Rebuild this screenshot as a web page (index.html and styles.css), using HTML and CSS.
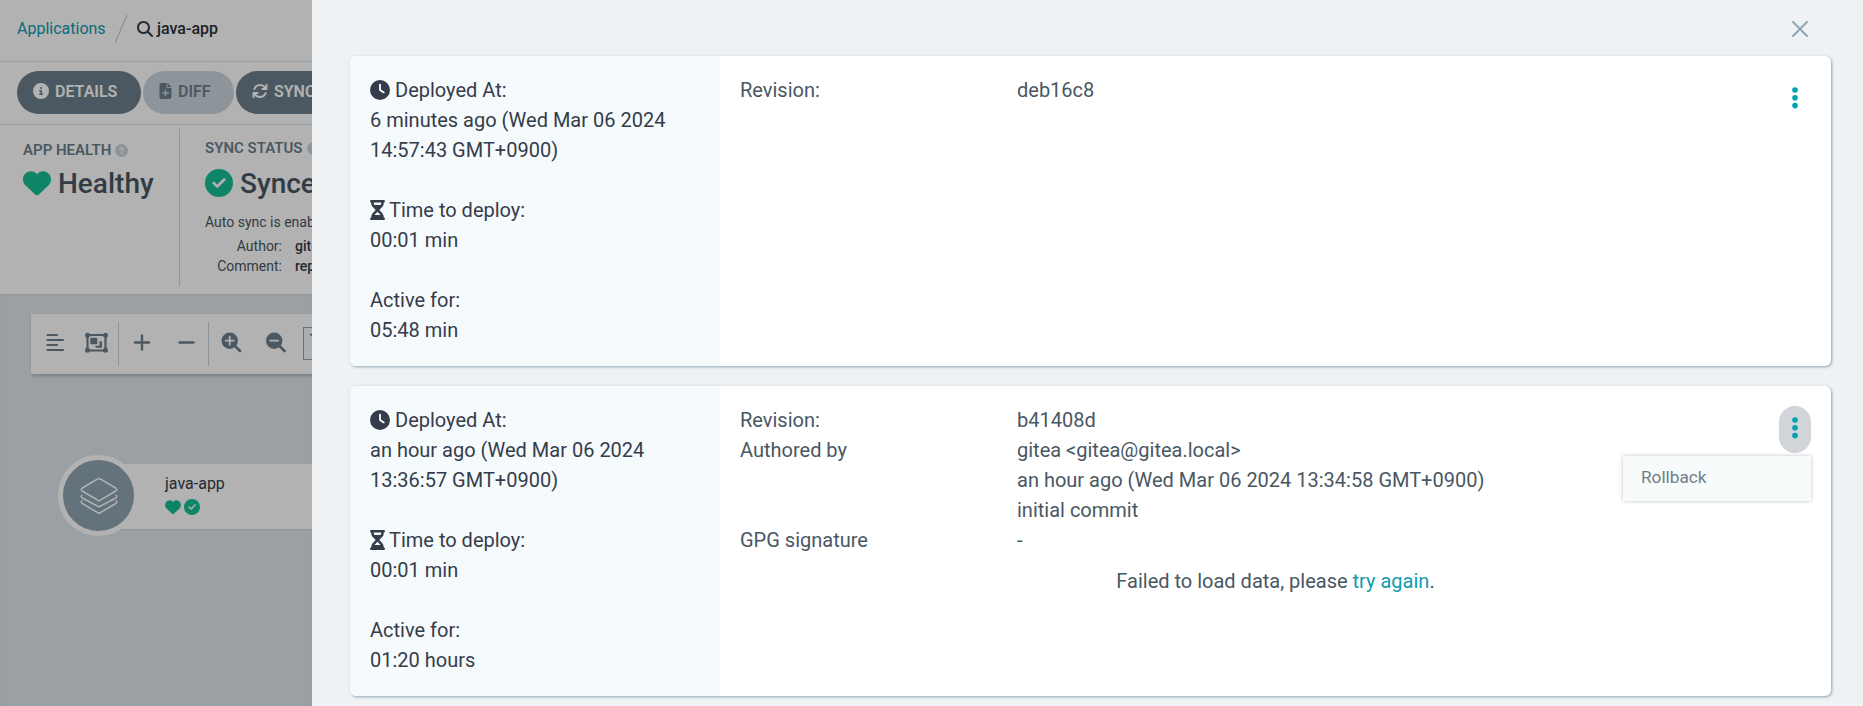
FILE: index.html
```
<!DOCTYPE html>
<html lang="en">
<head>
<meta charset="utf-8">
<title>java-app</title>
<link rel="stylesheet" href="styles.css">
</head>
<body>
<svg class="sprite" aria-hidden="true">
  <symbol id="heart" viewBox="0 0 512 512"><path d="M47.6 300.4L228.3 469.1c7.5 7 17.4 10.9 27.7 10.9s20.2-3.9 27.7-10.9L464.4 300.4c30.4-28.3 47.6-68 47.6-109.5v-5.8c0-69.9-50.5-129.5-119.4-141C347 36.5 300.6 51.4 268 84L256 96 244 84c-32.6-32.6-79-47.5-124.6-39.9C50.5 55.6 0 115.2 0 185.1v5.8c0 41.5 17.2 81.2 47.6 109.5z"/></symbol>
  <symbol id="check" viewBox="0 0 512 512"><path d="M256 512A256 256 0 1 0 256 0a256 256 0 1 0 0 512zM369 209L241 337c-9.4 9.4-24.6 9.4-33.9 0l-64-64c-9.4-9.4-9.4-24.6 0-33.9s24.6-9.4 33.9 0l47 47L335 175c9.4-9.4 24.6-9.4 33.9 0s9.4 24.6 0 33.9z"/></symbol>
  <symbol id="clock" viewBox="0 0 512 512"><path d="M256 0a256 256 0 1 1 0 512A256 256 0 1 1 256 0zM232 120V256c0 8 4 15.5 10.7 20l96 64c11 7.4 25.9 4.4 33.3-6.7s4.4-25.9-6.7-33.3L280 243.2V120c0-13.3-10.7-24-24-24s-24 10.7-24 24z"/></symbol>
  <symbol id="hourglass" viewBox="0 0 384 512"><path fill-rule="evenodd" d="M32 0h320a32 32 0 0 1 0 64v11c0 42-17 83-47 113l-67 68 67 68c30 30 47 71 47 113v11a32 32 0 0 1 0 64H32a32 32 0 0 1 0-64v-11c0-42 17-83 47-113l67-68-67-68C49 158 32 117 32 75V64a32 32 0 0 1 0-64zM96 64v11c0 19 6 37 16 53h160c10-16 16-34 16-53V64zM112 384h160c-3-5-8-10-12-15l-68-67-68 67c-4 5-9 10-12 15z"/></symbol>
  <symbol id="search" viewBox="0 0 512 512"><path d="M416 208c0 45.9-14.9 88.3-40 122.7L502.6 457.4c12.5 12.5 12.5 32.8 0 45.3s-32.8 12.5-45.3 0L330.7 376c-34.4 25.2-76.8 40-122.7 40C93.1 416 0 322.9 0 208S93.1 0 208 0S416 93.1 416 208zM208 352a144 144 0 1 0 0-288 144 144 0 1 0 0 288z"/></symbol>
  <symbol id="info" viewBox="0 0 512 512"><path d="M256 512A256 256 0 1 0 256 0a256 256 0 1 0 0 512zM216 336h24V272H216c-13.3 0-24-10.7-24-24s10.7-24 24-24h48c13.3 0 24 10.7 24 24v88h8c13.3 0 24 10.7 24 24s-10.7 24-24 24H216c-13.3 0-24-10.7-24-24s10.7-24 24-24zm40-208a32 32 0 1 1 0 64 32 32 0 1 1 0-64z"/></symbol>
  <symbol id="question" viewBox="0 0 512 512"><path fill-rule="evenodd" d="M256 512A256 256 0 1 0 256 0a256 256 0 1 0 0 512zM169.8 165.3c7.9-22.3 29.1-37.3 52.8-37.3h58.3c34.9 0 63.1 28.3 63.1 63.1c0 22.6-12.1 43.5-31.7 54.8L280 264.4c-.2 13-10.9 23.6-24 23.6c-13.3 0-24-10.7-24-24V250.5c0-8.6 4.6-16.5 12.1-20.8l44.3-25.4c4.7-2.7 7.6-7.7 7.6-13.1c0-8.4-6.8-15.1-15.1-15.1H222.6c-3.4 0-6.4 2.1-7.5 5.3l-.4 1.2c-4.4 12.5-18.2 19-30.6 14.6s-19-18.2-14.6-30.6zM224 352a32 32 0 1 1 64 0 32 32 0 1 1-64 0z"/></symbol>
  <symbol id="diff" viewBox="0 0 384 512"><path fill-rule="evenodd" d="M64 0C28.7 0 0 28.7 0 64V448c0 35.3 28.7 64 64 64H320c35.3 0 64-28.7 64-64V160H256c-17.7 0-32-14.3-32-32V0H64zM256 0V128H384L256 0zM216 232v64h64a24 24 0 0 1 0 48h-64v64a24 24 0 0 1-48 0v-64h-64a24 24 0 0 1 0-48h64v-64a24 24 0 0 1 48 0z"/></symbol>
  <symbol id="sync" viewBox="0 0 512 512"><path d="M105.1 202.6c7.7-21.8 20.2-42.3 37.8-59.8c62.5-62.5 163.8-62.5 226.3 0L386.3 160H336c-17.7 0-32 14.3-32 32s14.3 32 32 32H463.9c17.7 0 32-14.3 32-32V64c0-17.7-14.3-32-32-32s-32 14.3-32 32v51.2L414.4 97.6c-87.5-87.5-229.3-87.5-316.8 0C73.2 122 55.6 150.7 44.8 181.4c-5.9 16.7 2.9 34.9 19.5 40.8s34.9-2.9 40.8-19.5zM39 289.3c-5 1.5-9.8 4.2-13.7 8.2c-4 4-6.7 8.8-8.1 14c-.3 1.2-.6 2.5-.8 3.8c-.3 1.7-.4 3.4-.4 5.1V448c0 17.7 14.3 32 32 32s32-14.3 32-32V396.9l17.6 17.5c87.5 87.4 229.3 87.4 316.7 0c24.4-24.4 42.1-53.1 52.9-83.7c5.9-16.7-2.9-34.9-19.5-40.8s-34.9 2.9-40.8 19.5c-7.7 21.8-20.2 42.3-37.8 59.8c-62.5 62.5-163.8 62.5-226.3 0l-.1-.1L125.6 352H176c17.7 0 32-14.3 32-32s-14.3-32-32-32H48.4c-1.6 0-3.2 .1-4.8 .3s-3.1 .5-4.6 1z"/></symbol>
  <symbol id="dots" viewBox="0 0 6 22"><circle cx="3" cy="3" r="2.8"/><circle cx="3" cy="10.800" r="2.8"/><circle cx="3" cy="18.600" r="2.8"/></symbol>
</svg>

<div class="app">
  <main class="page">
    <div class="crumbs">
      <a class="crumb-link">Applications</a>
      <svg class="slash" viewBox="0 0 14 28"><path d="M1 28L13 0"/></svg>
      <svg class="ico crumb-search"><use href="#search"/></svg>
      <span class="crumb-current">java-app</span>
    </div>
    <div class="actions">
      <span class="btn btn-details"><svg class="ico"><use href="#info"/></svg>DETAILS</span>
      <span class="btn btn-diff"><svg class="ico diff"><use href="#diff"/></svg>DIFF</span>
      <span class="btn btn-sync"><svg class="ico"><use href="#sync"/></svg>SYNC</span>
    </div>
    <div class="status">
      <section class="health">
        <h2 class="label">APP HEALTH <svg class="help"><use href="#question"/></svg></h2>
        <div class="value"><svg class="big"><use href="#heart"/></svg>Healthy</div>
      </section>
      <section class="sync">
        <h2 class="label">SYNC STATUS <svg class="help"><use href="#question"/></svg></h2>
        <div class="value"><svg class="big"><use href="#check"/></svg>Synced</div>
        <p class="auto">Auto sync is enabled.</p>
        <div class="meta"><span class="key">Author:</span><b>gitea</b></div>
        <div class="meta"><span class="key">Comment:</span><b>repo</b></div>
      </section>
    </div>
    <div class="graph">
      <div class="toolbar">
        <svg class="tools" viewBox="0 0 272 60">
          <path class="stroke" d="M16.500 21h9.500M16.500 26h15.500M16.500 31h9.500M16.500 36h15.500"/>
          <path class="frame" d="M56.500 21h18v15.500h-18z"/>
          <g class="solid">
            <circle cx="56.500" cy="21.200" r="2.500"/><circle cx="74.500" cy="21.200" r="2.500"/><circle cx="56.500" cy="36.300" r="2.500"/><circle cx="74.500" cy="36.300" r="2.500"/>
            <rect x="59.300" y="23.800" width="7" height="6.500" rx="1"/>
            <path d="M68.500 27.300h1.500a1 1 0 0 1 1 1v4.500a1 1 0 0 1-1 1h-4.500a1 1 0 0 1-1-1v-1h3a1 1 0 0 0 1-1z"/>
          </g>
          <path class="rule" d="M87.500 8v44M177.500 8v44"/>
          <path class="plus" d="M104 28.500h14M111 21.500v14M148.500 28.500h14"/>
          <path class="handle" d="M203 31l6 6M247.500 31l6 6"/>
          <g class="solid"><circle cx="198.700" cy="26.700" r="8.200"/><circle cx="243.200" cy="26.700" r="8.200"/></g>
          <path class="cut" d="M194.700 26.700h8M198.700 22.700v8M239.200 26.700h8"/>
        </svg>
        <span class="percent">100%</span>
      </div>
      <div class="node">
        <div class="node-icon">
          <svg class="stack" viewBox="0 0 38 38">
            <path d="M2.300 23.500c-1.500 1-1.500 2 0 3L19 36.500l16.700-10c1.500-1 1.500-2 0-3M2.300 18c-1.500 1-1.500 2 0 3L19 30l16.700-9c1.500-1 1.500-2 0-3M17.800 1.900L2.300 11c-1.500 1-1.500 2 0 3L19 24l16.700-10c1.500-1 1.500-2 0-3L20.200 1.900q-1.200-.7-2.400 0z"/>
          </svg>
        </div>
        <div class="node-text">
          <span>java-app</span>
          <div class="node-status"><svg><use href="#heart"/></svg><svg><use href="#check"/></svg></div>
        </div>
      </div>
    </div>
    <div class="shade"></div>
  </main>

  <aside class="panel">
    <header class="panel-head">
      <svg class="close" viewBox="0 0 16 16"><path d="M1 1l14 14M15 1L1 15"/></svg>
    </header>
    <article class="card">
      <div class="summary">
        <div><svg class="lead"><use href="#clock"/></svg>Deployed At:</div>
        <div>6 minutes ago (Wed Mar 06 2024 14:57:43 GMT+0900)</div>
        <div class="gap"><svg class="lead glass"><use href="#hourglass"/></svg>Time to deploy:</div>
        <div>00:01 min</div>
        <div class="gap">Active for:</div>
        <div>05:48 min</div>
      </div>
      <div class="details">
        <dl class="fields"><dt>Revision:</dt><dd>deb16c8</dd></dl>
      </div>
      <div class="menu"><span class="menu-btn"><svg><use href="#dots"/></svg></span></div>
    </article>
    <article class="card">
      <div class="summary">
        <div><svg class="lead"><use href="#clock"/></svg>Deployed At:</div>
        <div>an hour ago (Wed Mar 06 2024 13:36:57 GMT+0900)</div>
        <div class="gap"><svg class="lead glass"><use href="#hourglass"/></svg>Time to deploy:</div>
        <div>00:01 min</div>
        <div class="gap">Active for:</div>
        <div>01:20 hours</div>
      </div>
      <div class="details">
        <dl class="fields">
          <dt>Revision:</dt><dd>b41408d</dd>
          <dt>Authored by</dt><dd>gitea &lt;gitea@gitea.local&gt;<br>an hour ago (Wed Mar 06 2024 13:34:58 GMT+0900)<br>initial commit</dd>
          <dt>GPG signature</dt><dd>-</dd>
        </dl>
        <p class="error">Failed to load data, please <a>try again</a>.</p>
      </div>
      <div class="menu">
        <span class="menu-btn open"><svg><use href="#dots"/></svg></span>
        <div class="dropdown">Rollback</div>
      </div>
    </article>
  </aside>
</div>
</body>
</html>
```

FILE: styles.css
```
* { box-sizing: border-box; }
body { margin: 0; font-family: Roboto, "Liberation Sans", sans-serif; color: #363c4a; }
h2, p, dl, dd { margin: 0; }
svg { display: block; flex: none; fill: currentColor; }
.sprite { position: absolute; width: 0; height: 0; }

.app { display: flex; width: 1863px; height: 706px; overflow: hidden; }

/* Application page behind the panel */
.page { position: relative; flex: none; width: 312px; height: 706px; overflow: hidden; background: #fff; white-space: nowrap; }
.shade { position: absolute; inset: 0; background: rgba(0, 0, 0, .3); }

.crumbs { display: flex; align-items: center; height: 62px; padding: 0 0 4px 17px; border-bottom: 1px solid #dee6eb; font-size: 16px; }
.crumb-link { color: #0f9bb0; width: 97px; }
.slash { width: 14px; height: 28px; fill: none; stroke: #b8c4cc; }
.crumb-search { margin: 0 4px 0 9px; color: #363c4a; }
.crumb-current { font-weight: 500; color: #2b2f3a; }
.ico { width: 16px; height: 16px; }

.actions { display: flex; gap: 2px; height: 63px; padding: 9px 0 0 17px; border-bottom: 1px solid #dee6eb; }
.btn { display: flex; align-items: center; flex: none; height: 43px; padding: 0 0 3px 16px; border-radius: 22px; background: #6d7f8b; color: #fff; font-size: 16px; font-weight: 600; }
.btn .ico { margin-right: 6px; }
.btn .diff { width: 13px; }
.btn-details { width: 124px; }
.btn-diff { width: 91px; background: #ccd6dd; color: #6d7f8b; }
.btn-sync { width: 120px; }

.status { display: flex; height: 169px; padding-top: 4px; }
.health { flex: none; width: 180px; height: 157px; padding: 11px 0 0 23px; border-right: 1px solid #ccd6dd; }
.health .value { margin-top: 3px; }
.sync { flex: none; padding: 9px 0 0 25px; }
.label { display: flex; align-items: center; gap: 4px; height: 20px; color: #6d7f8b; font-size: 15px; font-weight: 600; }
.help { width: 13px; height: 13px; color: #ccd6dd; }
.value { display: flex; align-items: center; gap: 7px; height: 40px; margin-top: 5px; color: #495763; font-size: 28px; font-weight: 500; }
.big { width: 28px; height: 28px; color: #18be94; }
.auto { height: 24px; margin-top: 7px; font-size: 14px; line-height: 24px; color: #495763; }
.auto + .meta { margin-top: 2px; }
.meta { display: flex; gap: 13px; height: 20px; font-size: 14px; line-height: 20px; color: #495763; }
.meta b { font-weight: 500; color: #363c4a; }
.key { width: 77px; text-align: right; }

.graph { height: 412px; padding-top: 20px; background: #dee6eb; box-shadow: inset 0 1px 2px #ccd6dd; }
.toolbar { display: flex; width: 400px; height: 60px; margin-left: 31px; background: #fff; box-shadow: 1px 2px 3px #a9b5be; }
.tools { width: 272px; height: 60px; fill: none; }
.stroke { stroke: #6d7f8b; stroke-width: 2.1; stroke-linecap: round; }
.frame { stroke: #6d7f8b; stroke-width: 2.2; }
.solid { fill: #6d7f8b; }
.rule { stroke: #ccd6dd; }
.plus { stroke: #6d7f8b; stroke-width: 2.4; stroke-linecap: round; }
.handle { stroke: #6d7f8b; stroke-width: 2.6; stroke-linecap: round; }
.cut { stroke: #fff; stroke-width: 1.8; stroke-linecap: round; }
.percent { width: 60px; height: 33px; margin-top: 13px; padding-left: 5px; border: 1px solid #8fa4b1; background: #f5fafd; font-size: 15px; line-height: 22px; }

.node { display: flex; width: 400px; height: 65px; margin: 90px 0 0 98px; background: #fff; box-shadow: 1px 1px 1px #ccd6dd; }
.node-icon { display: flex; align-items: center; justify-content: center; flex: none; width: 81px; height: 81px; margin: -9px 0 0 -40px; border: 5px solid #fff; border-radius: 50%; background: #8fa4b1; }
.stack { width: 38px; height: 38px; fill: none; stroke: #fff; stroke-width: 1.5; }
.node-text { padding: 9px 0 0 26px; font-size: 16px; line-height: 22px; }
.node-status { display: flex; gap: 3px; margin-top: 4px; color: #18be94; }
.node-status svg { width: 16px; height: 16px; }

/* Deployment history panel */
.panel { width: 1551px; height: 706px; padding: 0 32px 0 38px; background: #eef2f5; font-size: 20px; line-height: 30px; }
.panel-head { display: flex; justify-content: flex-end; height: 56px; padding: 21px 23px 0 0; }
.close { width: 16px; height: 16px; fill: none; stroke: #8fa4b1; stroke-width: 1.9; stroke-linecap: round; }
.card { position: relative; display: flex; height: 310px; margin-bottom: 20px; border-radius: 6px; background: #fff; box-shadow: 1px 1px 3px #8fa4b1; }
.summary { flex: none; width: 370px; padding: 19px 40px 0 20px; border-radius: 6px 0 0 6px; background: #f5fafd; color: #363c4a; }
.lead { display: inline-block; width: 20px; height: 20px; margin-right: 5px; vertical-align: -2.5px; }
.glass { width: 15px; margin-right: 4px; }
.gap { margin-top: 30px; }
.details { flex: 1; padding: 19px 20px; color: #495763; }
.fields { display: grid; grid-template-columns: 277px 1fr; }
.error { margin-top: 11px; text-align: center; }
.error a { color: #0f9bb0; }
.menu { position: absolute; top: 20px; right: 20px; display: flex; flex-direction: column; align-items: flex-end; }
.menu-btn { display: flex; justify-content: center; width: 32px; height: 47px; padding-top: 11px; border-radius: 16px; color: #00a2b3; }
.menu-btn svg { width: 6px; height: 22px; }
.open { background: #d1d5d9; }
.dropdown { width: 188px; height: 45px; margin-top: 3px; padding-left: 18px; background: #f8fbfb; box-shadow: 0 0 4px rgba(0, 0, 0, .25); color: #6d7f8b; font-size: 17.2px; line-height: 43px; }
```
